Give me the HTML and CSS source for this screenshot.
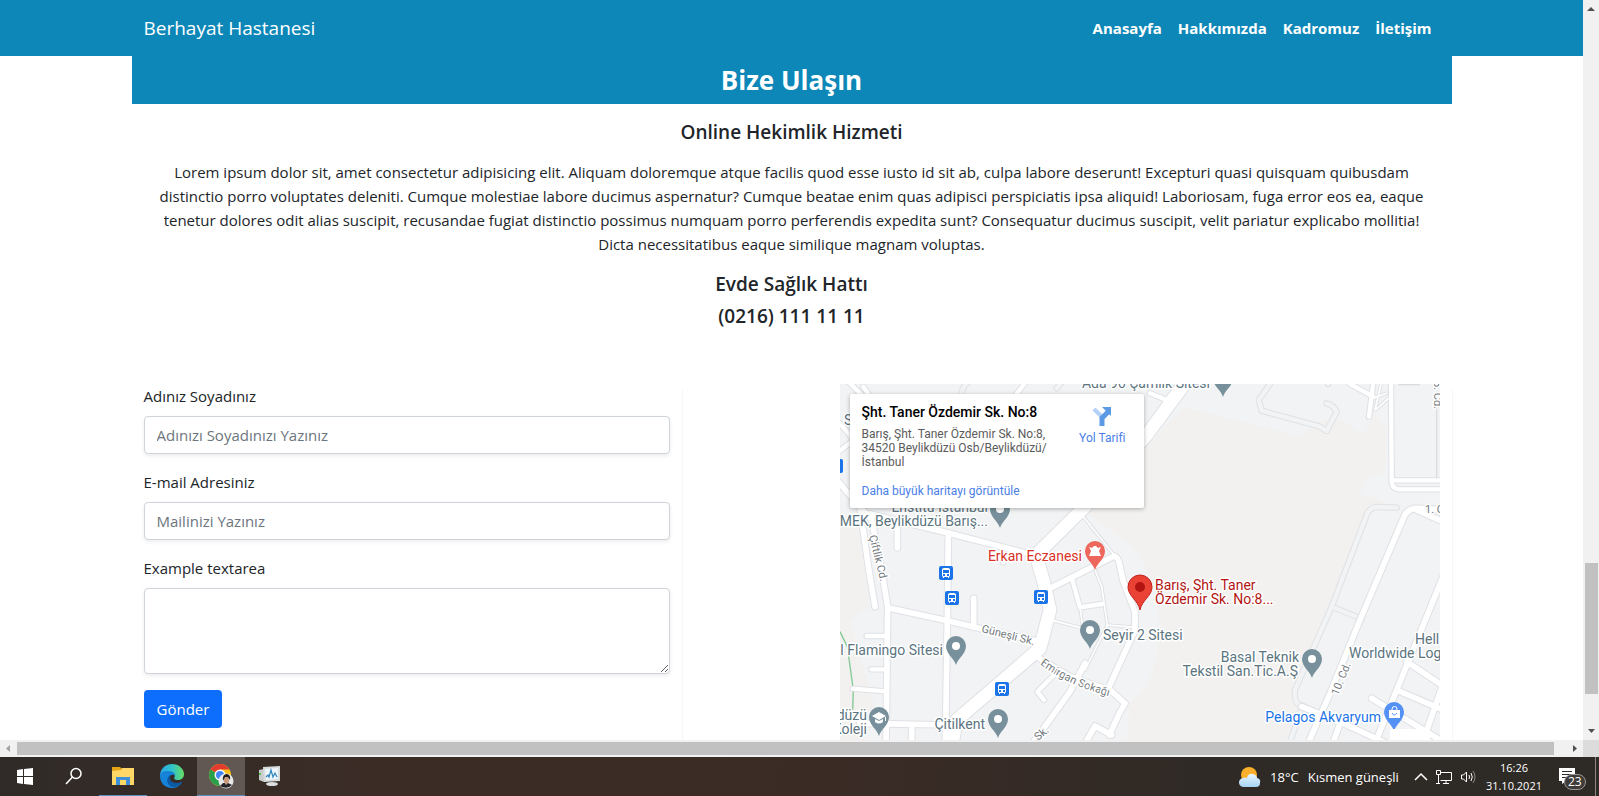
FILE: index.html
```html
<!DOCTYPE html>
<html lang="tr">
<head>
<meta charset="utf-8">
<meta name="viewport" content="width=device-width, initial-scale=1">
<title>Berhayat Hastanesi</title>
<link rel="stylesheet" href="styles.css">
</head>
<body>
<div class="viewport">
  <div class="page">
    <nav class="navbar">
      <div class="container navbar-inner">
        <a class="brand" href="#">Berhayat Hastanesi</a>
        <div class="nav-links">
          <a href="#">Anasayfa</a>
          <a href="#">Hakkımızda</a>
          <a href="#">Kadromuz</a>
          <a href="#">İletişim</a>
        </div>
      </div>
    </nav>
    <main class="container">
      <h2 class="section-title">Bize Ulaşın</h2>
      <section class="intro">
        <h5>Online Hekimlik Hizmeti</h5>
        <p>Lorem ipsum dolor sit, amet consectetur adipisicing elit. Aliquam doloremque atque facilis quod esse iusto id sit ab, culpa labore deserunt! Excepturi quasi quisquam quibusdam distinctio porro voluptates deleniti. Cumque molestiae labore ducimus aspernatur? Cumque beatae enim quas adipisci perspiciatis ipsa aliquid! Laboriosam, fuga error eos ea, eaque tenetur dolores odit alias suscipit, recusandae fugiat distinctio possimus numquam porro perferendis expedita sunt? Consequatur ducimus suscipit, velit pariatur explicabo mollitia! Dicta necessitatibus eaque similique magnam voluptas.</p>
        <h5 class="tight">Evde Sağlık Hattı</h5>
        <h5 class="tight">(0216) 111 11 11</h5>
      </section>
      <section class="contact">
        <form class="contact-form">
          <div class="field">
            <label for="name">Adınız Soyadınız</label>
            <input id="name" type="text" placeholder="Adınızı Soyadınızı Yazınız">
          </div>
          <div class="field">
            <label for="mail">E-mail Adresiniz</label>
            <input id="mail" type="email" placeholder="Mailinizi Yazınız">
          </div>
          <div class="field">
            <label for="message">Example textarea</label>
            <textarea id="message" rows="3"></textarea>
          </div>
          <button class="submit" type="button">Gönder</button>
        </form>
        <div class="map-column">
          <div class="map">
            <svg class="map-canvas" viewBox="0 0 600 450" width="600" height="450" role="img" aria-label="Harita">
              <defs>
                <g id="roads" class="line">
                  <path class="w38" d="M1050-10L920 165L740 375L588 525L612 610L630 690L600 805L350 1020L335 1100"/>
                  <path class="w16" d="M60 380L85 560L105 680M-10 300L95 420L128 590L143 680L138 1100"/>
                  <path class="w16" d="M90 402L322 458L590 528M325 460L322 720L316 1100"/>
                  <path class="w16" d="M143 683L322 722L430 748L600 785M401 742V655M172 430V503"/>
                  <path class="w12" d="M80 768H138M94 868H138M38 926L138 934"/>
                  <path class="w16" d="M625 628L822 528Q835 530 840 560L850 605L885 695V750L805 925L855 970L838 1000L808 1065M730 1100L765 1038L815 1065"/>
                  <path class="w16" d="M598 835L690 890L805 930M735 850L690 935L600 1060L570 1100"/>
                  <path class="w12" d="M642 885L592 935L612 960M697 600L720 682L786 672M490 520V548"/>
                  <path class="w4" d="M765 570L785 620L802 735L735 870M640 722L730 745M720 680L728 740M800 735L885 742M730 410L822 525"/>
                  <path class="w16" d="M60 1030L330 1035M215 1035V1100"/>
                  <path class="w12" d="M-10 220L130 110L70 20M-10 120L60 200M20 0L70 50M500 80L570 -10M930 40L980 60L1020 10"/>
                  <path class="w12" d="M1653-10L1655 305Q1656 328 1680 328H1820M1655 301H1820M1530 12L1600 50M1602-10L1587 110"/>
                  <path class="w4" d="M1626 0L1605 90L1618 80L1645 55M1600 55L1640 40"/>
                  <path class="w16" d="M1400 1100L1470 940L1560 720L1690 415Q1700 385 1730 385L1820 390M1730 390L1820 430"/>
                  <path class="w16" d="M1815 575L1670 930L1605 1090M1700 845L1820 925M1670 930L1820 995M1595 955L1800 1080M1385 980L1520 1035L1640 1090M1500 1030L1475 1100M1810 910L1750 1080"/>
                </g>
                <g id="service-roads" class="line">
                  <path class="w12" d="M1295 5L1256 60L1265 92L1440 140L1460 153L1490 95Q1480 75 1460 70M1670 383L1610 381Q1590 383 1582 400L1475 680L1365 930Q1362 965 1375 972L1460 1010M1475 680L1565 716M1385 985L1345 1100M645-5L660 0M360 60Q365 20 385 5M650 25L680-10M1464 0V12"/>
                </g>
                <path id="pin" d="M0 19C-2 12-10 8-10 0A10 10 0 1 1 10 0C10 8 2 12 0 19Z"/>
                <g id="bus">
                  <rect x="-7" y="-7" width="14" height="14" rx="2" fill="#1a73e8"/>
                  <path fill="#fff" fill-rule="evenodd" d="M-4-3Q-4-5-2-5H2Q4-5 4-3V3L3 4V5H2V4H-2V5H-3V4L-4 3ZM-3-3V0H3V-3ZM-3 1V3H-1V1ZM1 1V3H3V1Z"/>
                </g>
                <path id="emirgan" d="M200 280Q226 301 272 313"/>
              </defs>
              <rect width="600" height="450" fill="#f1f3f4"/>
              <g transform="translate(0 -4) scale(.33333)">
                <path fill="#f2f1ef" d="M1030 80L1380 170L1440 120L1500 120L1570 165L1600 100L1640 150L1635 275L1570 305L1560 340L1660 375L1590 380L1360 940L1380 1000L1330 1100L860 1100L870 970Q960 900 958 730Q950 600 880 500L740 400ZM0 430H55L90 680L30 720L110 1000L60 1100H0Z"/>
                <path fill="none" stroke="#81c995" stroke-width="4" d="M0 755L22 800L40 930L38 990"/>
                <use href="#service-roads" class="casing"/>
                <use href="#service-roads" class="service-fill"/>
                <path fill="none" stroke="#dadce0" stroke-width="4" d="M1790 50V295M1675 14H1740"/>
                <use href="#roads" class="casing"/>
                <use href="#roads" class="road-fill"/>
              </g>
              <use href="#bus" x="106" y="189"/><use href="#bus" x="112" y="214"/><use href="#bus" x="201" y="213"/><use href="#bus" x="162" y="305"/><use href="#bus" x="-4" y="82"/>
              <g class="pins">
                <use href="#pin" x="116" y="262"/><use href="#pin" x="158" y="335"/><use href="#pin" x="39" y="333"/><use href="#pin" x="250" y="246"/><use href="#pin" x="160" y="125"/><use href="#pin" x="472" y="275"/><use href="#pin" x="383" y="-6"/>
                <use href="#pin" x="255" y="167" fill="#ee675c"/><use href="#pin" x="554" y="328" fill="#5491f5"/>
              </g>
              <g fill="#fff"><circle cx="116" cy="262" r="4"/><circle cx="158" cy="335" r="4"/><circle cx="250" cy="246" r="4"/><circle cx="160" cy="125" r="4"/><circle cx="472" cy="275" r="4"/>
                <path d="M39 328L46 332L39 336L32 332ZM35 335L39 337L43 335V338Q39 341 35 338ZM45 333H46V337H45Z"/>
                <path d="M249 163L252 164L254 162H256L258 164L261 163L259 167L261 172H249L251 167Z"/>
                <path d="M549 326H560V334H549Z"/>
              </g>
              <path d="M552 326V325A2 2 0 0 1 557 325V326" fill="none" stroke="#fff"/>
              <path d="M552 329Q554 333 557 329" fill="none" stroke="#5491f5" stroke-width="1"/>
              <path fill="#ea4335" stroke="#c5221f" stroke-width="1" d="M300 226C298 216 288 212 288 203A12 12 0 1 1 312 203C312 212 302 216 300 226Z"/>
              <circle cx="300" cy="203" r="5" fill="#b31412"/>
              <g class="place">
                <text x="370" y="4" text-anchor="end">Ada 96 Çamlık Sitesi</text>
                <text x="4" y="41">S</text>
                <text x="148" y="128" text-anchor="end">Enstitü İstanbul</text>
                <text x="148" y="142" text-anchor="end">MEK, Beylikdüzü Barış...</text>
                <text x="103" y="271" text-anchor="end">l Flamingo Sitesi</text>
                <text x="145" y="345" text-anchor="end">Çitilkent</text>
                <text x="27" y="336" text-anchor="end">düzü</text>
                <text x="27" y="350" text-anchor="end">Koleji</text>
                <text x="263" y="256">Seyir 2 Sitesi</text>
                <text x="459" y="278" text-anchor="end">Basal Teknik</text>
                <text x="458" y="292" text-anchor="end">Tekstil San.Tic.A.Ş</text>
                <text x="575" y="260">Hell</text>
                <text x="509" y="274">Worldwide Log</text>
                <text class="health" x="242" y="177" text-anchor="end">Erkan Eczanesi</text>
                <text class="shop" x="541" y="338" text-anchor="end">Pelagos Akvaryum</text>
                <text class="target" x="315" y="206">Barış, Şht. Taner</text>
                <text class="target" x="315" y="220">Özdemir Sk. No:8...</text>
              </g>
              <g class="street">
                <text transform="translate(29 152) rotate(76)">Çiftlik Cd.</text>
                <text transform="translate(141 248) rotate(14)">Güneşli Sk.</text>
                <text><textPath href="#emirgan">Emirgan Sokağı</textPath></text>
                <text transform="translate(498 312) rotate(-68)">10. Cd.</text>
                <text transform="translate(198 357) rotate(-40)">Sk.</text>
                <text x="585" y="129">1. C</text>
                <text transform="translate(594 -3) rotate(90)">5. Cd.</text>
              </g>
              <rect x="550" y="345" width="40" height="40" fill="#fff"/>
            </svg>
            <div class="place-card">
              <div class="place-info">
                <strong>Şht. Taner Özdemir Sk. No:8</strong>
                <address>Barış, Şht. Taner Özdemir Sk. No:8, 34520 Beylikdüzü Osb/Beylikdüzü/<wbr>İstanbul</address>
                <a href="#">Daha büyük haritayı görüntüle</a>
              </div>
              <a class="directions" href="#">
                <svg width="22" height="22" viewBox="0 0 22 22" aria-hidden="true">
                  <path d="M3 4L11 12" stroke="#b3d1f8" stroke-width="4" fill="none"/>
                  <path d="M11 21V13L17 7" stroke="#5c9ae6" stroke-width="5" fill="none"/>
                  <path d="M11 2H20V11Z" fill="#5c9ae6"/>
                </svg>
                Yol Tarifi
              </a>
            </div>
          </div>
        </div>
      </section>
    </main>
  </div>
  <div class="scroll-v" aria-hidden="true">
    <svg width="16" height="17" viewBox="0 0 16 17"><path d="M4 11L8 7L12 11Z" fill="#505050"/></svg>
    <div class="track-v"><div class="thumb-v"></div></div>
    <svg width="16" height="17" viewBox="0 0 16 17"><path d="M5 6L8.500 10L12 6Z" fill="#505050"/></svg>
  </div>
</div>
<div class="scroll-h" aria-hidden="true">
  <svg width="17" height="17" viewBox="0 0 17 17"><path d="M10 5L6 8.500L10 12Z" fill="#a3a3a3"/></svg>
  <div class="thumb-h"></div>
  <svg width="17" height="17" viewBox="0 0 17 17"><path d="M7 5L11 8.500L7 12Z" fill="#505050"/></svg>
  <div class="corner"></div>
</div>
<footer class="taskbar">
  <div class="apps">
    <button aria-label="Başlat"><svg width="16" height="17" viewBox="0 0 16 17"><path fill="#fff" d="M0 2L6 1V8H0ZM7 1L16 0V8H7ZM0 9H6V16L0 15ZM7 9H16V17L7 16Z"/></svg></button>
    <button aria-label="Ara"><svg width="18" height="18" viewBox="0 0 18 18"><circle cx="11" cy="6.500" r="5" fill="none" stroke="#fff" stroke-width="1.500"/><path d="M7.500 10L1 17" stroke="#fff" stroke-width="1.500"/></svg></button>
    <button class="open" aria-label="Dosya Gezgini"><svg width="22" height="19" viewBox="0 0 22 19"><path fill="#e8a317" d="M0 0H8L10 2V6H0Z"/><path fill="#ffd766" d="M0 4L9 3L10 1H22V18H0Z"/><path fill="#3f8fd8" d="M4 10H18V18H14V13H8V18H4Z"/></svg></button>
    <button aria-label="Edge"><svg width="24" height="24" viewBox="0 0 24 24"><defs><linearGradient id="edge-top" x2="1"><stop stop-color="#2aa6e8"/><stop offset=".5" stop-color="#2fc3c9"/><stop offset="1" stop-color="#67dd65"/></linearGradient></defs><path fill="url(#edge-top)" d="M0 12C0 5 5 0 12 0C19 0 24 5 24 10C24 14 21 16 18 16C15 16 13 15 15 12C15 8 9 7 5 8C2 9 0 11 0 12Z"/><path fill="#1683d8" d="M0 12C0 8 4 7 8 7C13 7 16 10 15 12C14 10 9 10 9 15C9 20 15 21 22 18C20 22 16 24 12 24C5 24 0 19 0 12Z"/><path fill="#0c59a4" d="M11 11C7 12 6 18 9 21Q12 24 15 23Q20 22 22 18C17 20 11 19 10 15Q9 13 11 11Z"/></svg></button>
    <button class="open active" aria-label="Chrome"><svg width="26" height="26" viewBox="0 0 26 26"><circle cx="12" cy="12" r="11" fill="#fbc116"/><path fill="#e33b2e" d="M12 12L2.500 6.500A11 11 0 0 1 21.500 6.500H12Z"/><path fill="#28a04b" d="M2.500 6.500A11 11 0 0 0 12 23L16 15Z"/><circle cx="12" cy="12" r="5.500" fill="#fff"/><circle cx="12" cy="12" r="4" fill="#4285f4"/><circle cx="18" cy="18" r="7.500" fill="#e9e9ea"/><path fill="#25252b" d="M12 23L15 20H20L24 22Q19 27 12 23Z"/><path fill="#c99a7c" d="M16 14H21V19L18 22L16 19Z"/><path fill="#1c1a1c" d="M15 18Q14 11 19 11Q23 12 22 17L20 14H17Z"/></svg></button>
    <button aria-label="Kaynak İzleyicisi"><svg width="24" height="22" viewBox="0 0 24 22"><path fill="#c9cccd" d="M1 5L6 4V17L1 15Z"/><path fill="#55c24c" d="M1 8H3V10H1Z"/><path fill="#d9dcdd" d="M5 2L22 1V16L6 17Z"/><path fill="#eef6fb" d="M7 4L20 3V14L8 15Z"/><path d="M8 12L10 10L11 12L13 5L15 12L17 8L19 12" fill="none" stroke="#3487bd" stroke-width="1.200"/><ellipse cx="14" cy="19" rx="6" ry="2" fill="#dedfdf"/></svg></button>
  </div>
  <div class="tray">
    <button class="weather">
      <svg width="22" height="22" viewBox="0 0 22 22" aria-hidden="true"><defs><linearGradient id="cloud" x2="0" y2="1"><stop stop-color="#eaf6ff"/><stop offset="1" stop-color="#a5d4f5"/></linearGradient></defs><circle cx="10" cy="9" r="8" fill="#fbb02d"/><path fill="url(#cloud)" d="M5 21A4 4 0 0 1 4 12Q6 11 8 12Q9 7 14 8Q18 9 18 12Q22 13 21 17Q21 21 17 21Z"/></svg>
      <span>18°C</span><span>Kısmen güneşli</span>
    </button>
    <svg class="tray-icon" width="14" height="10" viewBox="0 0 14 10"><path d="M1 8L7 2L13 8" fill="none" stroke="#fff" stroke-width="1.500"/></svg>
    <svg class="tray-icon" width="18" height="16" viewBox="0 0 18 16"><path d="M6 3.500H16.500V11.500H5.500M8 14.500H14M11 12V14M3.500 6V14M1.500 1.500H5.500V5.500H1.500ZM1 14.500H5" fill="none" stroke="#fff"/></svg>
    <svg class="tray-icon" width="17" height="14" viewBox="0 0 17 14"><path d="M1.500 5V9H3.500L6.500 12V2L3.500 5ZM9 5Q10 7 9 9M11 3Q13.500 7 11 11" fill="none" stroke="#fff"/><path d="M13 1Q17 7 13 13" fill="none" stroke="#8a8785"/></svg>
    <div class="clock"><span>16:26</span><span>31.10.2021</span></div>
    <button class="notifications" aria-label="Bildirimler">
      <svg width="17" height="17" viewBox="0 0 17 17"><path fill="#fff" d="M0 0H16V13H7L3 16V13H0Z"/><path d="M3 3.500H13M3 6.500H13M3 9.500H10" stroke="#2f2b27"/></svg>
      <span class="badge">23</span>
    </button>
  </div>
</footer>
</body>
</html>
```
FILE: styles.css
```css
* { box-sizing: border-box; }

body {
  margin: 0;
  height: 100vh;
  display: flex;
  flex-direction: column;
  overflow: hidden;
  background: #fff;
  color: #212529;
  font: 15px/24px "Open Sans", "Noto Sans", sans-serif;
}

h2, h5, p { margin: 0; }
a { text-decoration: none; }
button { font: inherit; border: 0; background: none; padding: 0; }

.viewport { flex: 1; min-height: 0; display: flex; }
.page { flex: 1; min-width: 0; overflow: hidden; }
.container { max-width: 1320px; margin: 0 auto; }

/* Navigation */
.navbar { background: #0c87b8; }
.navbar-inner {
  display: flex;
  align-items: center;
  justify-content: space-between;
  min-height: 56px;
  padding: 0 12px;
}
.navbar a { color: #fff; }
.brand { font-size: 19px; }
.nav-links { display: flex; }
.nav-links a { padding: 8px; font-weight: 700; }

/* Intro */
.section-title {
  background: #0c87b8;
  color: #fff;
  font-size: 26px;
  line-height: 48px;
  font-weight: 700;
  text-align: center;
}
.intro { padding: 16px 24px 48px; text-align: center; }
.intro h5 { font-size: 19px; font-weight: 600; margin-bottom: 16px; }
.intro p { margin-bottom: 16px; }
.intro h5.tight { margin-bottom: 8px; }

/* Contact */
.contact { display: flex; justify-content: space-between; }
.contact-form,
.map-column { padding: 0 12px 24px; box-shadow: 2px 3px 2px -2px rgba(0, 0, 0, .1); }
.contact-form { flex: 0 1 550px; }
.field { margin-bottom: 16px; }
.field label { display: block; margin-bottom: 8px; }
.field input,
.field textarea {
  display: block;
  width: 100%;
  padding: 6px 12px;
  font: inherit;
  color: inherit;
  background: #fff;
  border: 1px solid #ced4da;
  border-radius: 4px;
  box-shadow: 0 2px 4px rgba(0, 0, 0, .075);
}
.field ::placeholder { color: #6c757d; opacity: 1; }
.field textarea { resize: vertical; }
.submit {
  padding: 7px 13px;
  color: #fff;
  background: #0d6efd;
  border-radius: 4px;
}

/* Map */
.map { position: relative; overflow: hidden; font-family: Roboto, sans-serif; }
.map-canvas { display: block; }
.line { fill: none; stroke-linecap: round; stroke-linejoin: round; }
.w4 { stroke-width: calc(5px + var(--edge)); }
.w12 { stroke-width: calc(13px + var(--edge)); }
.w16 { stroke-width: calc(17px + var(--edge)); }
.w38 { stroke-width: calc(38px + var(--edge)); }
.casing { --edge: 6px; stroke: #dfe1e5; }
.road-fill { --edge: 0px; stroke: #fff; }
.service-fill { --edge: 0px; stroke: #f1f3f4; }
.pins { fill: #78909c; }
.place, .street { paint-order: stroke; stroke: #fff; stroke-width: 3px; stroke-linejoin: round; }
.place { font-size: 14px; fill: #5b7480; }
.place .health { fill: #d93025; }
.place .shop { fill: #1a73e8; }
.place .target { fill: #b31412; }
.street { font-size: 11px; fill: #757b80; }

.place-card {
  position: absolute;
  top: 10px;
  left: 10px;
  width: 294px;
  display: flex;
  justify-content: space-between;
  padding: 8px 18px 9px 12px;
  background: #fff;
  border-radius: 2px;
  box-shadow: 0 1px 4px rgba(0, 0, 0, .3);
  font-size: 12px;
  line-height: 14px;
}
.place-info { width: 196px; }
.place-info strong { display: block; color: #000; font-size: 14px; line-height: 20px; font-weight: 500; }
.place-info address { margin: 5px 0 14px; color: #5b5b5b; font-style: normal; }
.place-card a { color: #4a80e8; }
.place-info a { display: block; line-height: 16px; }
.directions { display: flex; flex-direction: column; align-items: center; gap: 4px; padding-top: 3px; white-space: nowrap; }

/* Scrollbars */
.scroll-v { width: 16px; display: flex; flex-direction: column; background: #f1f1f1; }
.scroll-v svg { display: block; }
.track-v { flex: 1; display: flex; flex-direction: column; justify-content: flex-end; padding: 0 1px 29px 2px; }
.thumb-v { height: 131px; background: #c1c1c1; }
.scroll-h { display: flex; height: 17px; background: #f1f1f1; }
.thumb-h { flex: 1; margin: 2px 12px 2px 0; background: #c1c1c1; }
.corner { width: 16px; background: #dcdcdc; }

/* Taskbar */
.taskbar {
  display: flex;
  justify-content: space-between;
  height: 39px;
  color: #fff;
  background: linear-gradient(90deg, #302b28, #3c2c26 25%, #3b2b25 50%, #2e2a26 80%);
}
.apps { display: flex; gap: 1px; padding-left: 1px; }
.apps button { width: 48px; display: grid; place-items: center; border-bottom: 1px solid transparent; }
.apps .open { border-color: #5791c2; }
.apps .active { background: #615753; }
.tray { display: flex; align-items: center; gap: 7px; border-right: 1px solid #8a8785; margin-right: 3px; padding-right: 10px; }
.weather { display: flex; align-items: center; gap: 9px; color: #fff; font-size: 13px; margin-right: 8px; }
.clock { display: flex; flex-direction: column; align-items: center; padding-right: 10px; margin-left: 2px; font-size: 11px; line-height: 18px; }
.notifications { position: relative; width: 26px; height: 20px; text-align: left; }
.badge {
  position: absolute;
  left: 5px;
  top: 7px;
  padding: 0 3px;
  font-size: 12px;
  line-height: 14px;
  color: #fff;
  background: #3f3b38;
  border: 1px solid #9a9795;
  border-radius: 8px;
}
```
